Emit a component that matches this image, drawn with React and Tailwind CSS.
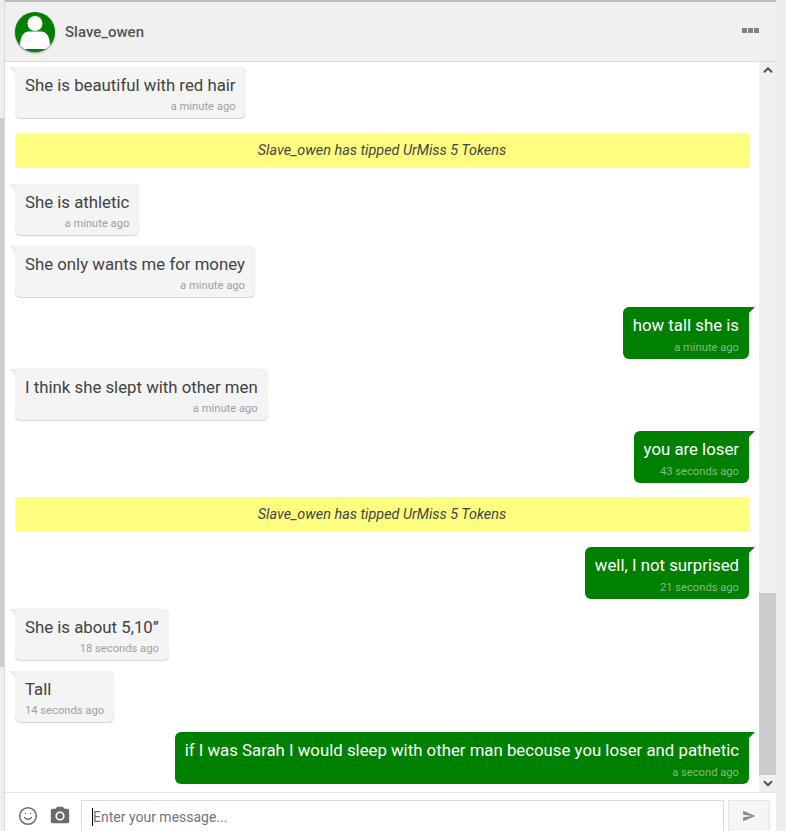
import { ChevronDown, ChevronUp, Smile } from "lucide-react";

const mensajes = [
  { tipo: "in", texto: "She is beautiful with red hair", hora: "a minute ago", mt: "mt-[5px]" },
  { tipo: "tip", mt: "mt-[14px]" },
  { tipo: "in", texto: "She is athletic", hora: "a minute ago", mt: "mt-[16px]" },
  { tipo: "in", texto: "She only wants me for money", hora: "a minute ago", mt: "mt-[10px]" },
  { tipo: "out", texto: "how tall she is", hora: "a minute ago", mt: "mt-[9px]" },
  { tipo: "in", texto: "I think she slept with other men", hora: "a minute ago", mt: "mt-[10px]" },
  { tipo: "out", texto: "you are loser", hora: "43 seconds ago", mt: "mt-[10px]" },
  { tipo: "tip", mt: "mt-[14px]" },
  { tipo: "out", texto: "well, I not surprised", hora: "21 seconds ago", mt: "mt-[15px]" },
  { tipo: "in", texto: "She is about 5,10”", hora: "18 seconds ago", mt: "mt-[10px]" },
  { tipo: "in", texto: "Tall", hora: "14 seconds ago", mt: "mt-[10px]" },
  {
    tipo: "out",
    texto: "if I was Sarah I would sleep with other man becouse you loser and pathetic",
    hora: "a second ago",
    mt: "mt-[9px]",
  },
];

const Tip = ({ mt }) => (
  <div
    className={`${mt} h-[35px] rounded-[3px] bg-[#ffff7f] flex items-center justify-center text-[14.4px] italic text-[#444]`}
  >
    Slave_owen has tipped UrMiss 5 Tokens
  </div>
);

const Burbuja = ({ tipo, texto, hora, mt }) => {
  if (tipo === "out") {
    return (
      <div className={`${mt} flex justify-end`}>
        <div className="relative h-[52px] rounded-[6px] rounded-tr-none bg-[#008000] px-[10px] pt-[6px] text-right">
          <div className="absolute right-[-6px] top-0 w-0 h-0 border-t-[6px] border-t-[#008000] border-r-[6px] border-r-transparent" />
          <div className="text-[16.8px] leading-[24px] text-white whitespace-nowrap">{texto}</div>
          <div className="text-[11.2px] leading-[15px] mt-[3px] text-[#7fbf7f]">{hora}</div>
        </div>
      </div>
    );
  }
  return (
    <div className={`${mt} flex justify-start`}>
      <div className="relative h-[52px] rounded-[6px] rounded-tl-none bg-[#f4f4f4] border-b border-b-[#d8d8d8] shadow-[0_0_1px_rgba(0,0,0,0.2)] px-[10px] pt-[6px]">
        <div className="absolute left-[-6px] top-0 w-0 h-0 border-t-[6px] border-t-[#ececec] border-l-[6px] border-l-transparent" />
        <div className="text-[16.8px] leading-[24px] text-[#424242] whitespace-nowrap">{texto}</div>
        <div className="text-[11.2px] leading-[15px] mt-[2px] text-right text-[#a0a0a0]">{hora}</div>
      </div>
    </div>
  );
};

const App = () => {
  return (
    <div className="flex h-[831px] w-[786px] overflow-hidden bg-white font-['Roboto',sans-serif]">
      {/* barra de la izquierda */}
      <div className="w-[5px] shrink-0 bg-[#eeeeee] border-r border-r-[#d8d8d8]">
        <div className="mt-[118px] h-[549px] w-[4px] bg-[#cdcdcd]" />
      </div>

      <div className="flex flex-col w-[771px] shrink-0 border-t-2 border-t-[#bdbdbd]">
        {/* Cabecera */}
        <div className="h-[60px] shrink-0 bg-[#f0f0f0] border-b border-b-[#dcdcdc] flex items-center pl-[10px] pr-[17px]">
          <div className="relative w-[40px] h-[40px] rounded-full bg-[#008000] overflow-hidden shadow-[0_1px_2px_rgba(0,0,0,0.4)]">
            <svg viewBox="0 0 40 40" className="w-full h-full">
              <circle cx="20" cy="11.5" r="8" fill="#fff" stroke="#008000" strokeWidth="1" />
              <path d="M5 34 C5 24 9 19.5 14 19.5 L26 19.5 C31 19.5 35 24 35 34 C35 36.5 33 37 30 37 L10 37 C7 37 5 36.5 5 34 Z" fill="#fff" />
            </svg>
          </div>
          <div className="ml-[10px] mt-[1px] text-[15px] font-medium text-[#555]">Slave_owen</div>
          <div className="ml-auto mb-[3px] flex gap-[1px]">
            <div className="w-[5px] h-[5px] bg-[#808080]" />
            <div className="w-[5px] h-[5px] bg-[#808080]" />
            <div className="w-[5px] h-[5px] bg-[#808080]" />
          </div>
        </div>

        {/* Mensajes */}
        <div className="h-[730px] shrink-0 flex">
          <div className="flex-1 pl-[10px] pr-[10px] overflow-hidden">
            {mensajes.map((m, i) =>
              m.tipo === "tip" ? <Tip key={i} mt={m.mt} /> : <Burbuja key={i} {...m} />
            )}
          </div>
          <div className="w-[17px] shrink-0 bg-[#f0f0f0] flex flex-col items-center">
            <ChevronUp size={14} strokeWidth={3.5} className="text-[#555] mt-[1px]" />
            <div className="mt-auto w-full h-[182px] bg-[#cdcdcd]" />
            <ChevronDown size={14} strokeWidth={3.5} className="text-[#555] h-[17px]" />
          </div>
        </div>

        {/* Caja de texto */}
        <div className="flex-1 border-t border-t-[#e6e6e6] bg-white flex items-start pt-[7px] pl-[13px]">
          <div className="w-[63px] shrink-0 flex items-center gap-[11px] h-[32px] text-[#6b6b6b]">
            <Smile size={20} strokeWidth={1.8} />
            <svg viewBox="0 0 24 24" width="22" height="22" fill="#6b6b6b">
              <path d="M9 2L7.17 4H4c-1.1 0-2 .9-2 2v12c0 1.1.9 2 2 2h16c1.1 0 2-.9 2-2V6c0-1.1-.9-2-2-2h-3.17L15 2H9zm3 15c-2.76 0-5-2.24-5-5s2.24-5 5-5 5 2.24 5 5-2.24 5-5 5z" />
              <circle cx="12" cy="12" r="3.2" />
            </svg>
          </div>
          <div className="w-[643px] h-[40px] shrink-0 border border-[#dcdcdc] pl-[10px] flex items-start pt-[5px] text-[14px] leading-[22px] text-[#757575]">
            <span className="w-[1px] h-[18px] mt-[2px] bg-black" />
            Enter your message...
          </div>
          <div className="ml-[4px] w-[42px] h-[40px] shrink-0 bg-[#f5f5f5] border border-[#e4e4e4] flex justify-center pt-[8px]">
            <svg viewBox="0 0 24 24" width="14" height="14" fill="#8a8a8a">
              <path d="M2.01 21L23 12 2.01 3 2 10l15 2-15 2z" />
            </svg>
          </div>
        </div>
      </div>

      {/* franja de la derecha */}
      <div className="flex-1 bg-[#eeeeee]" />
    </div>
  );
};

export default App;
